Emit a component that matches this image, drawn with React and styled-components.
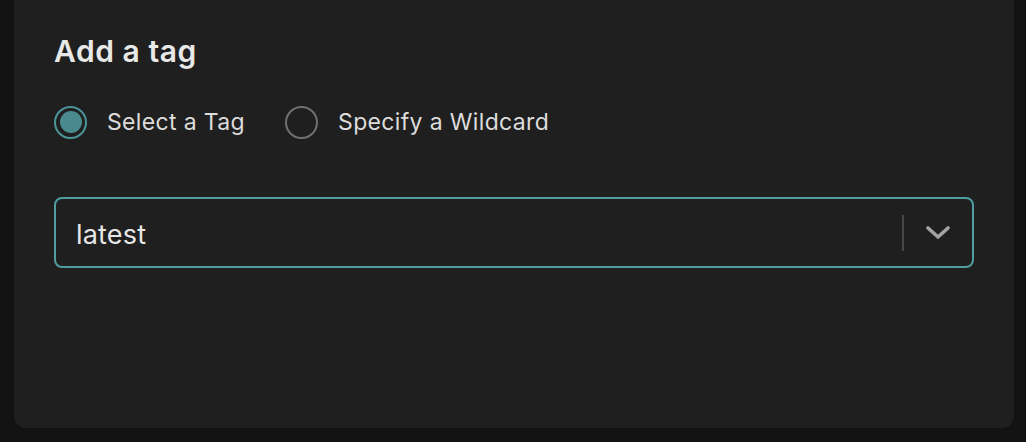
import React, { useState } from "react";
import styled, { createGlobalStyle } from "styled-components";

const Global = createGlobalStyle`
  html, body { margin: 0; padding: 0; background: #131313; }
  body { font-family: Inter, "Noto Sans", sans-serif; -webkit-font-smoothing: antialiased; }
`;

const Page = styled.div`
  display: flex;
  padding: 0 12px 14px 14px;
  height: 442px;
  box-sizing: border-box;
`;

const Panel = styled.section`
  flex: 1;
  background: #1f1f1f;
  border-radius: 0 0 12px 12px;
  padding: 30px 40px 0 40px;
  display: flex;
  flex-direction: column;
`;

const Title = styled.h2`
  margin: 0;
  font-size: 30px;
  line-height: 42px;
  font-weight: 600;
  color: #e8e8e8;
  letter-spacing: 0.55px;
`;

const RadioGroup = styled.div`
  display: flex;
  align-items: center;
  gap: 40px;
  margin-top: 33px;
`;

const RadioOption = styled.label`
  display: flex;
  align-items: center;
  gap: 20px;
  cursor: pointer;
  font-size: 23px;
  line-height: 34px;
  letter-spacing: 0.35px;
  color: #dcdcdc;
`;

const RadioCircle = styled.span`
  width: 33px;
  height: 33px;
  box-sizing: border-box;
  border-radius: 50%;
  border: 2px solid ${(p) => (p.$checked ? "#4a9499" : "#707070")};
  display: flex;
  align-items: center;
  justify-content: center;
  &::after {
    content: "";
    width: 22px;
    height: 22px;
    border-radius: 50%;
    background: #4a8a8f;
    display: ${(p) => (p.$checked ? "block" : "none")};
  }
`;

const Select = styled.div`
  margin-top: 58px;
  height: 71px;
  box-sizing: border-box;
  border: 2px solid #4f9ca1;
  border-radius: 8px;
  display: flex;
  align-items: center;
  padding-left: 20px;
`;

const Value = styled.span`
  flex: 1;
  font-size: 27px;
  letter-spacing: 0.2px;
  color: #e6e6e6;
  padding-top: 3px;
`;

const Separator = styled.span`
  width: 2px;
  height: 36px;
  background: #474747;
`;

const Indicator = styled.span`
  width: 68px;
  display: flex;
  align-items: center;
  justify-content: center;
`;

export default function App() {
  const [mode, setMode] = useState("tag");
  return (
    <>
      <Global />
      <Page>
        <Panel>
          <Title>Add a tag</Title>
          <RadioGroup>
            <RadioOption onClick={() => setMode("tag")}>
              <RadioCircle $checked={mode === "tag"} />
              Select a Tag
            </RadioOption>
            <RadioOption onClick={() => setMode("wild")}>
              <RadioCircle $checked={mode === "wild"} />
              Specify a Wildcard
            </RadioOption>
          </RadioGroup>
          <Select>
            <Value>latest</Value>
            <Separator />
            <Indicator>
              <svg width="26" height="16" viewBox="0 0 26 16">
                <path d="M3 3 L13 12 L23 3" fill="none" stroke="#a3a3a3" strokeWidth="3.6" strokeLinecap="round" strokeLinejoin="round" />
              </svg>
            </Indicator>
          </Select>
        </Panel>
      </Page>
    </>
  );
}
